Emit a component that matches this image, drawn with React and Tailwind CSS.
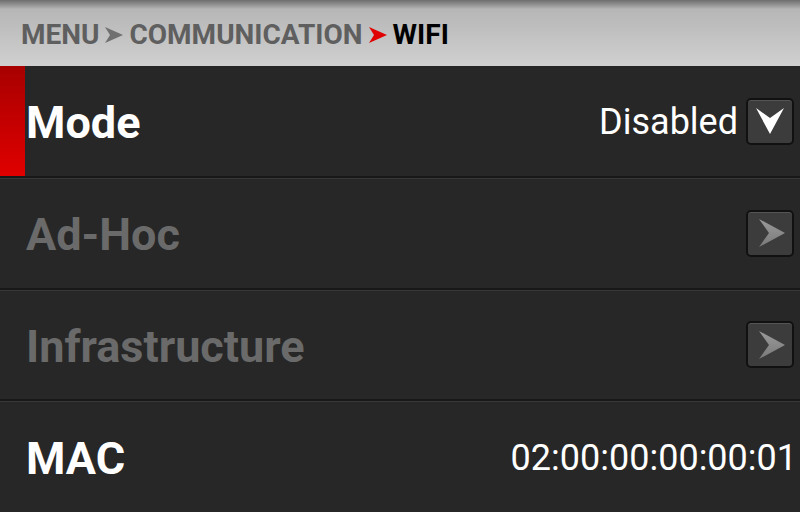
import React from 'react'

function Crumb({ red }) {
  return (
    <svg width="20" height="20" viewBox="0 0 20 20" className="mx-[5px] shrink-0">
      <polygon points="1,2 19,10 1,18 6,10" fill={red ? '#e00000' : '#707070'} />
    </svg>
  )
}

function DropButton() {
  return (
    <div className="w-[48px] h-[47px] rounded-[5px] border-2 border-[#111] bg-[#3c3c3c] shadow-[inset_0_1px_0_#555] flex items-center justify-center">
      <svg width="30" height="28" viewBox="0 0 30 28">
        <polygon points="1,1 15,11 29,1 15,27" fill="#ffffff" />
      </svg>
    </div>
  )
}

function NextButton() {
  return (
    <div className="w-[48px] h-[47px] rounded-[5px] border-2 border-[#111] bg-[#3c3c3c] shadow-[inset_0_1px_0_#555] flex items-center justify-center">
      <svg width="28" height="30" viewBox="0 0 28 30" className="ml-[3px]">
        <defs>
          <linearGradient id="ag" x1="0" y1="0" x2="0" y2="1">
            <stop offset="0" stopColor="#9a9a9a" />
            <stop offset="1" stopColor="#7a7a7a" />
          </linearGradient>
        </defs>
        <polygon points="1,1 27,15 1,29 11,15" fill="url(#ag)" />
      </svg>
    </div>
  )
}

function Row({ h, label, dim, right, active }) {
  return (
    <div className={`${h} relative flex items-center border-b-2 border-[#181818] shadow-[0_1px_0_#383838]`}>
      {active && (
        <div className="absolute left-0 top-0 bottom-0 w-[25px] bg-linear-to-b from-[#a80000] to-[#e00000]" />
      )}
      <div className={`pl-[26px] pt-[3px] text-[45px] font-bold leading-none ${dim ? 'text-[#6a6a6a]' : 'text-white'}`}>
        {label}
      </div>
      <div className="ml-auto flex items-center pr-[6px]">{right}</div>
    </div>
  )
}

export default function App() {
  return (
    <div className="w-[800px] h-[512px] overflow-hidden bg-[#272727] font-['Roboto',sans-serif] flex flex-col">
      <div className="h-[66px] shrink-0 bg-linear-to-b from-[#6e6e6e] via-[#b6b6b6] via-[14%] to-[#d0d0d0] flex items-center pl-[21px] pt-[3px]">
        <span className="text-[28px] font-bold text-[#5f5f5f] leading-none">MENU</span>
        <Crumb />
        <span className="text-[28px] font-bold text-[#5f5f5f] leading-none">COMMUNICATION</span>
        <Crumb red />
        <span className="text-[28px] font-bold text-black leading-none">WIFI</span>
      </div>
      <Row
        h="h-[112px]"
        label="Mode"
        active
        right={
          <>
            <span className="text-[36px] text-white leading-none mr-[8px] pt-[2px]">Disabled</span>
            <DropButton />
          </>
        }
      />
      <Row h="h-[112px]" label="Ad-Hoc" dim right={<NextButton />} />
      <Row h="h-[111px]" label="Infrastructure" dim right={<NextButton />} />
      <div className="flex-1 flex items-center">
        <div className="pl-[26px] pt-[3px] text-[45px] font-bold leading-none text-white">MAC</div>
        <div className="ml-auto pr-[3px] pt-[3px] text-[36px] text-white leading-none">02:00:00:00:00:01</div>
      </div>
    </div>
  )
}
